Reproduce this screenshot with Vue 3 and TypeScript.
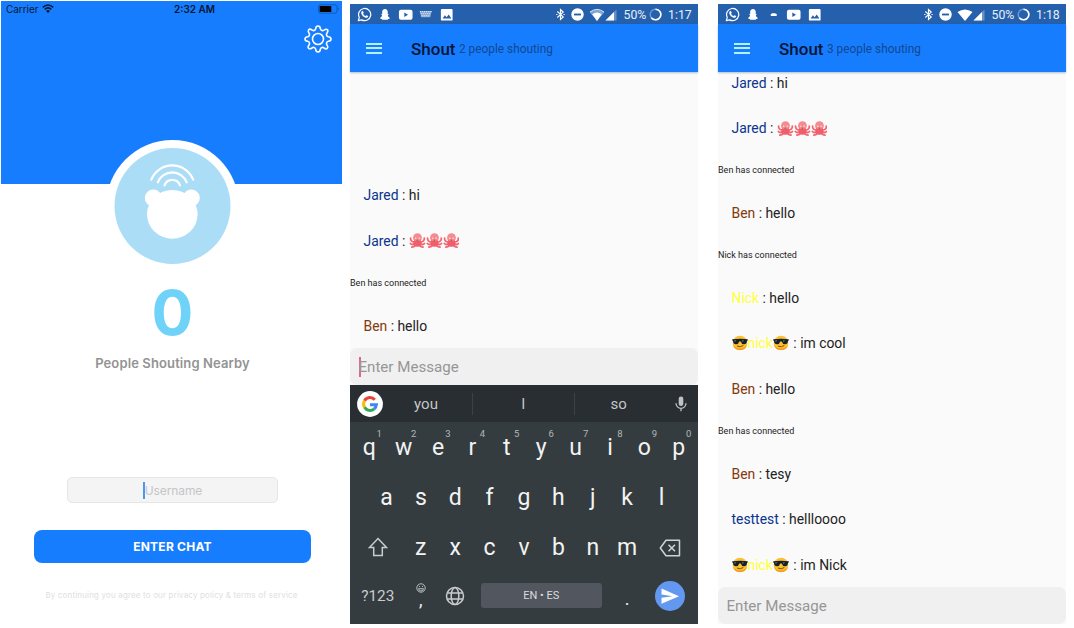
<script setup lang="ts">
interface Message {
  kind: 'chat' | 'notice'
  name?: string
  tone?: string
  text?: string
  cool?: boolean
  octopuses?: number
}
interface ChatScreen {
  id: string
  notifications: string[]
  wifi: string
  time: string
  people: number
  messages: Message[]
  typing: boolean
}

const jaredHi: Message = { kind: 'chat', name: 'Jared', tone: 'navy', text: 'hi' }
const jaredOcto: Message = { kind: 'chat', name: 'Jared', tone: 'navy', octopuses: 3 }
const benJoined: Message = { kind: 'notice', text: 'Ben has connected' }
const ben = (text: string): Message => ({ kind: 'chat', name: 'Ben', tone: 'brown', text })
const coolNick = (text: string): Message => ({ kind: 'chat', name: 'nick', tone: 'yellow', cool: true, text })

const screens: ChatScreen[] = [
  {
    id: 'first',
    notifications: ['whatsapp', 'snap', 'youtube', 'keys', 'image'],
    wifi: 'wifi-half',
    time: '1:17',
    people: 2,
    messages: [jaredHi, jaredOcto, benJoined, ben('hello')],
    typing: true,
  },
  {
    id: 'second',
    notifications: ['whatsapp', 'snap', 'dash', 'youtube', 'image'],
    wifi: 'wifi-full',
    time: '1:18',
    people: 3,
    messages: [
      jaredHi,
      jaredOcto,
      benJoined,
      ben('hello'),
      { kind: 'notice', text: 'Nick has connected' },
      { kind: 'chat', name: 'Nick', tone: 'yellow', text: 'hello' },
      coolNick('im cool'),
      ben('hello'),
      benJoined,
      ben('tesy'),
      { kind: 'chat', name: 'testtest', tone: 'navy', text: 'hellloooo' },
      coolNick('im Nick'),
    ],
    typing: false,
  },
]

const topKeys = 'qwertyuiop'.split('').map((k, i) => ({ k, n: (i + 1) % 10 }))
const midKeys = 'asdfghjkl'.split('')
const lowKeys = 'zxcvbnm'.split('')
</script>

<template>
  <svg class="defs" width="0" height="0">
    <symbol id="whatsapp" viewBox="0 0 16 16">
      <path d="M1.4 14.6l1-3.6A6.5 6.5 0 1 1 5 13.7z" fill="none" stroke="#fff" stroke-width="1.3" stroke-linejoin="round" />
      <path d="M5.3 4.4l1-.2.9 2-.7.9c.6 1.2 1.400 1.900 2.600 2.500l.8-.9 2 .9c.1 1.300-1 1.900-2 1.900C7.600 11.300 4.600 8.500 4.500 6c0-.7.3-1.200.8-1.600z" fill="#fff" />
    </symbol>
    <symbol id="snap" viewBox="0 0 16 16">
      <path d="M8.500 2.200c2 0 3 1.500 3 3.300v2l.8-.1v.8l-.8.700c.3 1.300 1 2.100 2 2.600v1l-1.700.3-.3.9H5.500l-.3-.9-1.700-.3v-1c1-.5 1.700-1.300 2-2.600l-.8-.7v-.8l.8.1v-2c0-1.800 1-3.300 3-3.300z" fill="#fff" />
    </symbol>
    <symbol id="youtube" viewBox="0 0 16 16">
      <rect x="1" y="3" width="14.500" height="10.500" rx="2" fill="#fff" />
      <path d="M6.700 5.900l4 2.350-4 2.350z" fill="#2560ac" />
    </symbol>
    <symbol id="keys" viewBox="0 0 16 16">
      <path d="M2 4.400h12.500L13 10.800H3.500z" fill="#fff" opacity=".4" />
      <path d="M2 5h12.500M2.700 7.200h11.200M3.600 9.400h9.400" stroke="#dce7f5" stroke-width="1.300" stroke-dasharray="1.500 .7" />
    </symbol>
    <symbol id="image" viewBox="0 0 16 16">
      <rect x="2" y="2" width="12.500" height="12.500" rx="1.300" fill="#fff" />
      <path d="M3.800 12.200l2.500-3.300 1.800 2.100 2.300-3 2.800 4.200z" fill="#2560ac" />
    </symbol>
    <symbol id="dash" viewBox="0 0 16 16">
      <rect x="5" y="7.300" width="6.500" height="2.300" rx=".7" fill="#fff" />
      <rect x="6.200" y="6.300" width="4" height="2" rx="1" fill="#fff" opacity=".7" />
    </symbol>
    <symbol id="wifi-full" viewBox="0 0 16 14">
      <path d="M.5 4Q8-1.200 15.500 4L8 13z" fill="#fff" />
    </symbol>
    <symbol id="wifi-half" viewBox="0 0 16 14">
      <path d="M.5 4Q8-1.200 15.500 4L8 13z" fill="#7ea5d8" />
      <path d="M3.300 6.300Q8 2.800 12.700 6.300L8 13z" fill="#fff" />
      <path d="M1 4Q8-1.200 15 4" fill="none" stroke="#d3e0f2" stroke-width="1" />
    </symbol>
    <symbol id="octopus" viewBox="0 0 18 18">
      <g fill="none" stroke="#f26671" stroke-width="1.900" stroke-linecap="round">
        <path d="M6.500 10.500C3.500 11 1.300 9 1.700 6.500" />
        <path d="M11.500 10.500c3 .5 5.200-1.500 4.800-4" />
        <path d="M6.500 12c-2 1.500-4 1.400-5 .2M11.500 12c2 1.500 4 1.400 5 .2" />
        <path d="M7 13.500c-.7 1.700-2 2.500-4 2.500M11 13.500c.7 1.700 2 2.500 4 2.500" />
      </g>
      <circle cx="9" cy="6" r="4.700" fill="#f58a91" />
      <path d="M5.500 8.500Q9 11 12.500 8.500l.8 5.500Q9 17.500 4.700 14z" fill="#ee5f6b" />
      <circle cx="7.200" cy="6.500" r=".7" fill="#fff" /><circle cx="10.800" cy="6.500" r=".7" fill="#fff" />
      <circle cx="9" cy="9" r="1" fill="#c9535d" />
    </symbol>
    <symbol id="cool" viewBox="0 0 16 16">
      <circle cx="8" cy="8" r="7.300" fill="#fcc22d" />
      <path d="M.9 9.500a7.300 7.300 0 0 0 14.200 0Q13 13.500 8 13.500T.9 9.500z" fill="#f29a24" />
      <path d="M.3 4.300Q8 3.400 15.700 4.300v1.300l-.7.400Q14.700 9.300 12 9.300 9.500 9.300 8.800 6.500H7.200Q6.500 9.300 4 9.300 1.300 9.300 1 6L.3 5.600z" fill="#17202a" />
      <path d="M2.300 5.300l2 .1-1.500 1.500zM10 5.300l2 .1-1.500 1.500z" fill="#75838c" />
      <path d="M5.300 11.200Q8.500 12.800 11 10.700" fill="none" stroke="#7b4c18" stroke-width="1" stroke-linecap="round" />
    </symbol>
  </svg>

  <main class="board">
    <section class="ios">
      <header class="hero">
        <div class="ios-status">
          <span class="carrier">Carrier</span>
          <svg class="ios-wifi" viewBox="0 0 12 9">
            <g fill="none" stroke="#04172f" stroke-width="1.600">
              <path d="M.8 3.300Q6-1.300 11.200 3.300" /><path d="M2.700 5.400Q6 2.500 9.300 5.400" />
            </g>
            <path d="M4 6.900Q6 5.300 8 6.900L6 9z" fill="#04172f" />
          </svg>
          <span class="ios-time">2:32 AM</span>
          <svg class="battery" viewBox="0 0 22 10">
            <rect x=".5" y=".8" width="18.500" height="8.400" rx="2" fill="none" stroke="#1059b8" />
            <rect x="1.700" y="2" width="11.600" height="6" rx=".6" fill="#000" />
            <path d="M20 3.500q2 1.500 0 3z" fill="#1059b8" />
          </svg>
        </div>
        <svg class="gear" viewBox="0 0 28 28" fill="none" stroke="#fff" stroke-width="1.600" stroke-linejoin="round">
          <path d="M11.700 3.600Q12 1 14 1T16.300 3.600Q16.600 5 18 5.400 19.200 5.900 20.300 5 22 3.600 23.300 4.700T23 8Q22.100 9.100 22.600 10.200 23 11.500 24.400 11.700 27 12 27 14T24.400 16.300Q23 16.500 22.600 17.800 22.100 18.900 23 20 24.400 22 23.300 23.300T20 23Q18.900 22.100 17.800 22.600 16.500 23 16.300 24.400 16 27 14 27T11.700 24.400Q11.500 23 10.200 22.600 9.100 22.100 8 23 6 24.400 4.700 23.300T5 20Q5.900 18.900 5.400 17.800 5 16.500 3.600 16.300 1 16 1 14T3.600 11.700Q5 11.500 5.400 10.200 5.900 9.100 5 8 3.600 6 4.700 4.700T8 5Q9.100 5.900 10.200 5.400 11.500 5 11.700 3.600z" />
          <circle cx="14" cy="14" r="5.500" />
        </svg>
      </header>
      <svg class="avatar" viewBox="0 0 133 133">
        <circle cx="66.500" cy="66.500" r="66.500" fill="#fff" />
        <circle cx="66.500" cy="66" r="58" fill="#acddf7" />
        <g fill="none" stroke="#fff" stroke-width="2.200" stroke-linecap="round">
          <path d="M45.300 39.700a22.500 22.500 0 0 1 41.900 0" />
          <path d="M51.800 42.300a15.500 15.500 0 0 1 28.900 0" />
          <path d="M58.500 45.300a8.300 8.300 0 0 1 15.500 0" />
        </g>
        <circle cx="47.300" cy="58" r="8.500" fill="#fff" />
        <circle cx="85.300" cy="58" r="8.500" fill="#fff" />
        <ellipse cx="66.300" cy="74.300" rx="25.300" ry="24.400" fill="#fff" />
      </svg>
      <div class="count">0</div>
      <div class="nearby">People Shouting Nearby</div>
      <div class="username"><i class="ios-caret"></i><span>Username</span></div>
      <button class="enter">ENTER CHAT</button>
      <p class="terms">By continuing you agree to our privacy policy &amp; terms of service</p>
    </section>

    <section v-for="s in screens" :key="s.id" class="phone">
      <div class="status">
        <div class="notifs">
          <svg v-for="n in s.notifications" :key="n" class="notif"><use :href="'#' + n" /></svg>
        </div>
        <div class="system">
          <svg class="bt" viewBox="0 0 10 14" fill="none" stroke="#fff" stroke-width="1.300">
            <path d="M1.500 3.700l6.500 6-3 2.800V1.500L8 4.300l-6.500 6" />
            <path d="M.3 7h1.400M8.300 7h1.400" />
          </svg>
          <svg class="dnd" viewBox="0 0 14 14">
            <circle cx="7" cy="7" r="6.700" fill="#fff" /><rect x="3.300" y="6" width="7.400" height="2" fill="#2560ac" />
          </svg>
          <svg class="wifi"><use :href="'#' + s.wifi" /></svg>
          <svg class="signal" viewBox="0 0 12 12">
            <path d="M11.500.5v11H.5z" fill="#6a92ca" /><path d="M9 3v8.500H.5z" fill="#fff" />
          </svg>
          <span class="percent">50%</span>
          <svg class="ring" viewBox="0 0 14 14" fill="none" stroke-width="1.700">
            <circle cx="7" cy="7" r="5.700" stroke="#6d95cd" />
            <path d="M7 1.300a5.700 5.700 0 1 1-4.500 9.200" stroke="#fff" />
          </svg>
          <span class="clock">{{ s.time }}</span>
        </div>
      </div>
      <header class="appbar">
        <div class="burger"><i></i><i></i><i></i></div>
        <h1>Shout</h1>
        <span class="people">{{ s.people }} people shouting</span>
      </header>
      <div class="feed">
        <div v-for="(m, i) in s.messages" :key="i" :class="m.kind">
          <template v-if="m.kind === 'notice'">{{ m.text }}</template>
          <template v-else>
            <svg v-if="m.cool" class="cool"><use href="#cool" /></svg>
            <span :class="m.tone">{{ m.name }}</span>
            <svg v-if="m.cool" class="cool"><use href="#cool" /></svg>
            <span class="said" :class="{ spaced: m.cool }">&nbsp;:&nbsp;{{ m.text }}</span>
            <svg v-for="o in m.octopuses ?? 0" :key="o" class="octopus"><use href="#octopus" /></svg>
          </template>
        </div>
      </div>
      <div class="composer"><i v-if="s.typing" class="caret"></i><span>Enter Message</span></div>

      <div v-if="s.typing" class="keyboard">
        <div class="strip">
          <svg class="google" viewBox="0 0 26 26">
            <circle cx="13" cy="13" r="12.900" fill="#fff" />
            <g fill="none" stroke-width="3">
              <path d="M17.800 8.700A6.400 6.400 0 0 0 7.500 9.700" stroke="#ea4335" />
              <path d="M7.500 9.700a6.400 6.400 0 0 0 0 6.600" stroke="#fbbc05" />
              <path d="M7.500 16.300a6.400 6.400 0 0 0 9.800 1.500" stroke="#34a853" />
              <path d="M17.300 17.800a6.400 6.400 0 0 0 2.100-4.100H13" stroke="#4285f4" />
            </g>
          </svg>
          <div class="words"><span>you</span><span>I</span><span>so</span></div>
          <svg class="mic" viewBox="0 0 12 16">
            <rect x="3.700" y=".5" width="4.600" height="9.500" rx="2.300" fill="#bfc3c5" />
            <path d="M1 7.300a5 5 0 0 0 10 0M6 12.300v3" fill="none" stroke="#bfc3c5" stroke-width="1.300" />
          </svg>
        </div>
        <div class="row">
          <span v-for="t in topKeys" :key="t.k" class="key">{{ t.k }}<sup>{{ t.n }}</sup></span>
        </div>
        <div class="row"><span v-for="k in midKeys" :key="k" class="key">{{ k }}</span></div>
        <div class="row">
          <span class="key wide">
            <svg class="shift" viewBox="0 0 20 20"><path d="M10 1.500l8.500 9H14.300v8H5.700v-8H1.500z" fill="none" stroke="#c9cccd" stroke-width="1.500" /></svg>
          </span>
          <span v-for="k in lowKeys" :key="k" class="key">{{ k }}</span>
          <span class="key wide">
            <svg class="erase" viewBox="0 0 22 18" fill="none" stroke="#d0d3d4" stroke-width="1.500">
              <path d="M7 1.200h13.500v15.600H7L1.300 9z" stroke-linejoin="round" /><path d="M9.500 5.700l6.500 6.600M16 5.700l-6.500 6.600" />
            </svg>
          </span>
        </div>
        <div class="row last">
          <span class="key wide sym">?123</span>
          <span class="key comma">
            <svg viewBox="0 0 10 10" fill="none" stroke="#c9cccd" stroke-width=".9">
              <circle cx="5" cy="5" r="4.200" /><path d="M2.500 5.700h5Q7 8 5 8T2.500 5.700zM3.500 3v1M6.500 3v1" />
            </svg>
            <b>,</b>
          </span>
          <span class="key">
            <svg class="globe" viewBox="0 0 20 20" fill="none" stroke="#c9cccd" stroke-width="1.500">
              <circle cx="10" cy="10" r="8.500" /><ellipse cx="10" cy="10" rx="3.800" ry="8.500" /><path d="M2.300 7h15.400M2.300 13h15.400" />
            </svg>
          </span>
          <span class="space">EN • ES</span>
          <span class="key dot">.</span>
          <span class="key wide">
            <svg class="send" viewBox="0 0 30 30">
              <circle cx="15" cy="15" r="15" fill="#6398f0" /><path d="M6.500 7.500L24 15.200 6.500 22.800v-6l11-1.600-11-1.700z" fill="#fff" />
            </svg>
          </span>
        </div>
      </div>
    </section>
  </main>
</template>

<style>
body { background: #fff; overflow: hidden; }
</style>

<style scoped>
* { box-sizing: border-box; }
svg { display: block; flex: none; }
.defs { position: absolute; }
.board { width: 1074px; height: 628px; display: flex; background: #fff; font-family: Roboto, "Liberation Sans", sans-serif; }

.ios { width: 341px; margin: 1px 8px 0 1px; display: flex; flex-direction: column; align-items: center; font-family: Inter, "Liberation Sans", sans-serif; }
.hero { width: 100%; height: 182.500px; background: #177dff; flex: none; display: flex; flex-direction: column; }
.ios-status { height: 16px; display: grid; grid-template-columns: 40px 1fr auto 1fr 22px; align-items: center; padding: 0 2px 0 5px; color: #04172f; font-size: 10px; }
.carrier { font-size: 10px; letter-spacing: -.05px; }
.ios-wifi { width: 12px; height: 9px; justify-self: start; margin: -1px 0 0 -4px; }
.ios-time { font-weight: 600; font-size: 10px; margin-left: 21px; margin-right: -4px; }
.battery { width: 22px; height: 10px; grid-column: 5; }
.gear { width: 28px; height: 28px; align-self: flex-end; margin: 8px 10px 0 0; }
.avatar { width: 133px; height: 133px; margin-top: -44px; margin-left: 2px; position: relative; }
.count { height: 64px; margin: 8px 0 0 2px; line-height: 64px; font-size: 62px; font-weight: 700; color: #6fd2f9; }
.nearby { margin: 8.500px 0 0 2px; height: 20px; line-height: 20px; font-size: 13px; font-weight: 600; color: #939393; letter-spacing: .12px; }
.username { margin: 104px 0 0 2px; width: 211px; height: 26px; border: 1px solid #e6e6e6; border-radius: 5px; background: #f4f4f4; display: flex; align-items: center; justify-content: center; color: #c5c5c9; font-size: 12px; letter-spacing: -.1px; }
.ios-caret { width: 2px; height: 17px; background: #4a96f5; }
.enter { margin: 27px 0 0 2px; width: 277px; height: 33px; border: 0; border-radius: 8px; background: #177dff; color: #fff; font: 700 12px Inter, sans-serif; letter-spacing: .25px; padding: 0; }
.terms { margin: 24.500px 0 0; height: 14px; line-height: 14px; font-size: 8px; color: #e0e0e0; letter-spacing: .16px; white-space: nowrap; }

.phone { width: 348px; height: 620px; margin: 4px 20px 0 0; display: flex; flex-direction: column; background: #fafafa; flex: none; }
.phone:last-child { margin-right: 0; }
.status { height: 20px; background: #2560ac; display: flex; justify-content: space-between; align-items: center; padding: 1px 7px 0 5px; flex: none; color: #e8eff8; }
.notifs { display: flex; gap: 5.400px; margin-left: 2px; }
.notif { width: 15px; height: 15px; }
.system { display: flex; align-items: center; font-size: 12.300px; }
.bt { width: 9px; height: 13px; margin-right: 5.500px; }
.dnd { width: 13px; height: 13px; margin-right: 5px; }
.wifi { width: 16px; height: 14px; margin-right: 0; }
.signal { width: 12px; height: 12px; margin-right: 7px; }
.percent { width: 25px; }
.ring { width: 13px; height: 13px; margin: 0 6px 0 .5px; }
.clock { width: 23px; }
.appbar { height: 47.500px; background: #177dff; display: flex; align-items: center; padding: 0 0 0 16px; flex: none; box-shadow: 0 1px 2px rgba(30, 70, 140, .35); position: relative; z-index: 1; }
.burger { width: 16px; height: 11px; margin-top: 1px; display: flex; flex-direction: column; justify-content: space-between; }
.burger i { height: 2px; background: #b5f1ff; }
.appbar h1 { margin: 2px 3px 0 29px; width: 45px; font-size: 17px; line-height: 20px; font-weight: 500; color: #061435; }
.people { font-size: 11.850px; color: #12488f; margin-top: 2px; }
.feed { flex: 1; min-height: 0; overflow: hidden; display: flex; flex-direction: column; justify-content: flex-end; }
.chat { height: 45.500px; padding: .5px 0 0 13.500px; display: flex; align-items: center; font-size: 13.900px; color: #222; flex: none; white-space: nowrap; }
.notice { height: 39.300px; display: flex; align-items: center; font-size: 9px; color: #222; flex: none; }
.navy { color: #0b338f; }
.brown { color: #84380b; }
.yellow { color: #ffff3d; }
.cool { width: 16px; height: 16px; }
.spaced { margin-left: 1px; }
.octopus { width: 16.900px; height: 17px; }
.composer { height: 37px; background: #f0f0f0; border-radius: 7px; display: flex; align-items: center; padding-left: 8.500px; color: #969696; font-size: 15.100px; flex: none; }
.caret { width: 2px; height: 20px; margin-right: -2px; background: #dc6591; }

.keyboard { height: 239px; background: #353c3f; flex: none; color: #f2f3f3; }
.strip { height: 37px; background: #292e32; display: flex; align-items: center; padding: 0 11px 0 6.500px; }
.google { width: 26px; height: 26px; margin-right: -2.500px; }
.words { width: 284px; display: grid; grid-template-columns: 92px 101.500px 89.500px; margin-right: 11px; flex: none; }
.words span { height: 22px; line-height: 22px; text-align: center; font-size: 15px; color: #c3c7c8; }
.words span + span { border-left: 1px solid #3b4144; }
.mic { width: 12px; height: 16px; }
.row { height: 50px; display: flex; justify-content: center; padding: 0 2px; }
.key { width: 34.400px; display: flex; align-items: center; justify-content: center; font-size: 23px; position: relative; }
.key sup { position: absolute; left: 24.500px; top: 6px; font-size: 9.500px; line-height: 12px; color: #b3b7b9; }
.wide { width: 51.600px; }
.shift { width: 20px; height: 20px; }
.erase { width: 22px; height: 18px; margin-top: 2px; }
.last { height: 52px; padding-bottom: 4px; }
.sym { font-size: 15.300px; color: #c9cccd; }
.comma { flex-direction: column; }
.comma svg { width: 10px; height: 10px; margin-top: -3px; }
.comma b { font-weight: 400; font-size: 18px; line-height: 14px; }
.globe { width: 20px; height: 20px; }
.space { width: 121px; height: 25px; margin: 11px 8.300px 0; border-radius: 3px; background: #52565f; line-height: 25px; text-align: center; font-size: 11px; color: #dadcdd; }
.dot { font-size: 18px; padding-top: 4px; }
.send { width: 30px; height: 30px; }
</style>
